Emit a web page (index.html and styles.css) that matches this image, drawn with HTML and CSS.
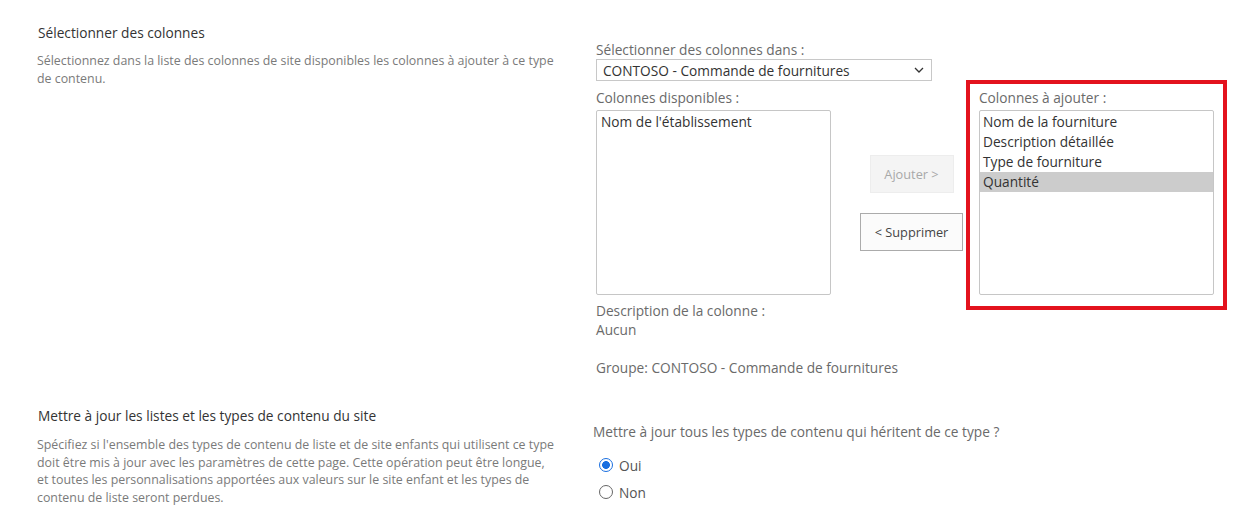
FILE: index.html
```html
<!DOCTYPE html>
<html lang="fr">
<head>
<meta charset="utf-8">
<title>Sélectionner des colonnes</title>
<link rel="stylesheet" href="styles.css">
</head>
<body>
<main class="page">
  <section class="row row-columns">
    <div class="info">
      <h2 class="info-title">Sélectionner des colonnes</h2>
      <p class="info-desc">Sélectionnez dans la liste des colonnes de site disponibles les colonnes à ajouter à ce type<br>de contenu.</p>
    </div>
    <div class="fields fields-columns">
      <div class="field-label">Sélectionner des colonnes dans :</div>
      <div class="select">
        <span>CONTOSO - Commande de fournitures</span>
        <svg class="chevron" width="10" height="6" viewBox="0 0 10 6"><polyline points="1,1 5,5 9,1" fill="none" stroke="#333" stroke-width="1.3"/></svg>
      </div>
      <div class="picker">
        <div class="list-col">
          <div class="field-label">Colonnes disponibles :</div>
          <div class="listbox">
            <div class="opt">Nom de l'établissement</div>
          </div>
        </div>
        <div class="btn-col">
          <button class="btn btn-add" disabled>Ajouter &gt;</button>
          <button class="btn btn-remove">&lt; Supprimer</button>
        </div>
        <div class="list-col list-col-target">
          <div class="field-label">Colonnes à ajouter :</div>
          <div class="listbox">
            <div class="opt">Nom de la fourniture</div>
            <div class="opt">Description détaillée</div>
            <div class="opt">Type de fourniture</div>
            <div class="opt opt-selected">Quantité</div>
          </div>
          <div class="annot"></div>
        </div>
      </div>
      <div class="col-desc">
        <div>Description de la colonne :</div>
        <div>Aucun</div>
        <div class="col-group">Groupe: CONTOSO - Commande de fournitures</div>
      </div>
    </div>
  </section>

  <section class="row row-update">
    <div class="info">
      <h2 class="info-title">Mettre à jour les listes et les types de contenu du site</h2>
      <p class="info-desc info-desc-long">Spécifiez si l'ensemble des types de contenu de liste et de site enfants qui utilisent ce type<br>doit être mis à jour avec les paramètres de cette page. Cette opération peut être longue,<br>et toutes les personnalisations apportées aux valeurs sur le site enfant et les types de<br>contenu de liste seront perdues.</p>
    </div>
    <div class="fields fields-update">
      <div class="question">Mettre à jour tous les types de contenu qui héritent de ce type ?</div>
      <div class="radios">
        <div class="radio-row"><span class="radio radio-on"></span><span>Oui</span></div>
        <div class="radio-row"><span class="radio"></span><span>Non</span></div>
      </div>
    </div>
  </section>
</main>
</body>
</html>
```

FILE: styles.css
```css
html, body {
  margin: 0;
  padding: 0;
  background: #ffffff;
}

body {
  font-family: "Open Sans", "Noto Sans", sans-serif;
  color: #333;
}

.page {
  width: 1240px;
}

.row {
  display: grid;
  grid-template-columns: 559px 1fr;
  padding-left: 37px;
}

.row-columns {
  padding-top: 23px;
}

.row-update {
  margin-top: 29px;
}

.info-title {
  margin: 0;
  padding-left: 1px;
  font-size: 13.7px;
  line-height: 20px;
  font-weight: 400;
  color: #333;
}

.info-desc {
  margin: 9px 0 0;
  font-size: 12.38px;
  line-height: 17.5px;
  color: #7a7a7a;
  white-space: nowrap;
}

.info-desc-long {
  margin-top: 10px;
  line-height: 17.67px;
}

.fields {
  font-size: 13.7px;
}

.fields-columns {
  padding-top: 17px;
}

.field-label {
  line-height: 19px;
  color: #6a6a6a;
}

.select {
  box-sizing: border-box;
  width: 336px;
  height: 22px;
  border: 1px solid #c8c8c8;
  display: flex;
  align-items: center;
  justify-content: space-between;
  padding: 0 6px 0 6px;
  color: #333;
}

.chevron {
  margin-right: 1px;
}

.picker {
  display: flex;
  align-items: flex-start;
  margin-top: 7px;
}

.list-col {
  width: 235px;
}

.list-col-target {
  position: relative;
  margin-left: 16px;
}

.listbox {
  box-sizing: border-box;
  margin-top: 3px;
  height: 185px;
  border: 1px solid #c6c6c6;
  border-radius: 2px;
  padding: 1px 0;
  line-height: 20px;
  color: #333;
}

.opt {
  padding-left: 4px;
}

.list-col-target .opt {
  padding-left: 3px;
}

.opt-selected {
  background: #cccccc;
}

.btn-col {
  display: flex;
  flex-direction: column;
  align-items: center;
  gap: 20px;
  width: 103px;
  margin-left: 29px;
  margin-top: 67px;
}

.btn {
  box-sizing: border-box;
  height: 38px;
  font-family: "Open Sans", "Noto Sans", sans-serif;
  font-size: 12.75px;
  padding: 0;
}

.btn-add {
  width: 84px;
  background: #f4f4f4;
  border: 1px solid #ededed;
  color: #a8a8a8;
}

.btn-remove {
  width: 103px;
  background: #fbfbfb;
  border: 1px solid #ababab;
  color: #444;
}

.annot {
  position: absolute;
  left: -13px;
  right: -13px;
  top: -8px;
  bottom: -15px;
  border: 4px solid #e3121d;
  pointer-events: none;
}

.col-desc {
  margin-top: 6px;
  line-height: 19px;
  color: #6a6a6a;
}

.col-group {
  margin-top: 19px;
}

.fields-update {
  padding-top: 15.5px;
  margin-left: -3px;
}

.question {
  line-height: 19px;
  color: #6a6a6a;
}

.radios {
  margin-top: 11px;
}

.radio-row {
  display: flex;
  align-items: center;
  height: 27px;
  padding-left: 6px;
  gap: 6px;
  color: #555;
}

.radio {
  box-sizing: border-box;
  width: 14px;
  height: 14px;
  border-radius: 50%;
  border: 1.5px solid #666;
  background: #fff;
}

.radio-on {
  border-color: #1a6fe0;
  background: radial-gradient(circle, #1a6fe0 0 3.6px, #fff 4.2px);
}
```
